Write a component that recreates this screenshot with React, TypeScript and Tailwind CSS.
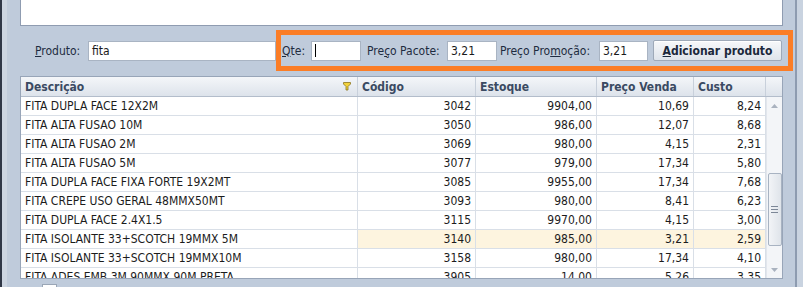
import React from 'react';

type Row = { desc: string; cod: string; est: string; venda: string; custo: string; hl?: boolean };

const rows: Row[] = [
  { desc: 'FITA DUPLA FACE 12X2M', cod: '3042', est: '9904,00', venda: '10,69', custo: '8,24' },
  { desc: 'FITA ALTA FUSAO 10M', cod: '3050', est: '986,00', venda: '12,07', custo: '8,68' },
  { desc: 'FITA ALTA FUSAO 2M', cod: '3069', est: '980,00', venda: '4,15', custo: '2,31' },
  { desc: 'FITA ALTA FUSAO 5M', cod: '3077', est: '979,00', venda: '17,34', custo: '5,80' },
  { desc: 'FITA DUPLA FACE FIXA FORTE 19X2MT', cod: '3085', est: '9955,00', venda: '17,34', custo: '7,68' },
  { desc: 'FITA CREPE USO GERAL 48MMX50MT', cod: '3093', est: '980,00', venda: '8,41', custo: '6,23' },
  { desc: 'FITA DUPLA FACE 2.4X1.5', cod: '3115', est: '9970,00', venda: '4,15', custo: '3,00' },
  { desc: 'FITA ISOLANTE 33+SCOTCH 19MMX 5M', cod: '3140', est: '985,00', venda: '3,21', custo: '2,59', hl: true },
  { desc: 'FITA ISOLANTE 33+SCOTCH 19MMX10M', cod: '3158', est: '980,00', venda: '17,34', custo: '4,10' },
  { desc: 'FITA ADES EMB 3M 90MMX 90M PRETA', cod: '3905', est: '14,00', venda: '5,26', custo: '3,35' },
];

const font = { fontFamily: 'Tahoma, "DejaVu Sans Condensed", "Liberation Sans", sans-serif' };

function Field({ value, w, caret }: { value?: string; w: string; caret?: boolean }) {
  return (
    <div className={`${w} h-[20px] shrink-0 bg-white border border-[#a9b4c3] flex items-center px-[3px] text-[12px] text-[#1a1a1a]`}>
      {caret ? <span className="w-px h-[13px] bg-black" /> : value}
    </div>
  );
}

function FilterIcon() {
  return (
    <svg width="8" height="9" viewBox="0 0 8 9">
      <path d="M0.5 0.5 H7.5 V2 L5 4.5 V8 H3 V4.5 L0.5 2 Z" fill="#f2d23c" stroke="#8a7420" strokeWidth="0.8" />
    </svg>
  );
}

export default function App() {
  return (
    <div className="w-[803px] h-[287px] overflow-hidden bg-[#bfcbdb] flex" style={font}>
      {/* left frame */}
      <div className="w-[2px] shrink-0 bg-[#2f3746]" />
      <div className="w-[5px] shrink-0 bg-[#ccd5e1]" />

      <div className="flex-1 flex flex-col pl-[13px] pr-[2px] min-w-0">
        {/* memo area */}
        <div className="h-[26px] w-[763px] shrink-0 bg-white border border-t-0 border-[#8f9cb1]" />

        {/* filter row */}
        <div className="flex items-center mt-[4px] h-[41px] shrink-0">
          <span className="ml-[15px] w-[53px] shrink-0 text-[12px] text-[#1e2b40]">
            <span className="underline">P</span>roduto:
          </span>
          <div className="w-[188px] h-[20px] shrink-0 bg-white border border-[#a9b4c3] flex items-center px-[3px] text-[12px] text-[#1a1a1a]">
            fita
          </div>
          <div className="h-[41px] w-[517px] shrink-0 border-[5px] border-[#fb7d26] flex items-center pl-[1px] text-[12px] text-[#1e2b40]">
            <span className="w-[29px] shrink-0">
              <span className="underline">Q</span>te:
            </span>
            <Field w="w-[50px]" caret />
            <span className="ml-[6px] w-[80px] shrink-0 whitespace-nowrap">
              Pre<span className="underline">ç</span>o Pacote:
            </span>
            <Field w="w-[50px]" value="3,21" />
            <span className="ml-[3px] w-[99px] shrink-0 whitespace-nowrap">
              Preço Pro<span className="underline">m</span>oção:
            </span>
            <Field w="w-[49px]" value="3,21" />
            <button className="ml-[5px] w-[129px] h-[21px] shrink-0 rounded-[2px] border border-[#9ea9b8] bg-gradient-to-b from-[#f7f8fa] to-[#dfe4eb] text-[12px] font-bold text-[#1b283b] shadow-[inset_0_1px_0_#ffffff]">
              <span className="underline">A</span>dicionar produto
            </button>
          </div>
        </div>

        {/* grid */}
        <div className="mt-[5px] w-[763px] h-[203px] shrink-0 border border-[#98a5b8] bg-white overflow-hidden flex flex-col">
          <div className="flex h-[20px] bg-gradient-to-b from-[#f4f6f9] to-[#dde3eb] border-b border-[#b3bdcb] text-[12px] font-bold text-[#3a4a62] shrink-0">
            <div className="w-[337px] border-r border-[#c8d0db] flex items-center justify-between pl-[4px] pr-[6px]">
              <span>Descrição</span>
              <FilterIcon />
            </div>
            <div className="w-[118px] border-r border-[#c8d0db] flex items-center pl-[4px]">Código</div>
            <div className="w-[121px] border-r border-[#c8d0db] flex items-center pl-[4px]">Estoque</div>
            <div className="w-[97px] border-r border-[#c8d0db] flex items-center pl-[4px]">Preço Venda</div>
            <div className="w-[72px] border-r border-[#c8d0db] flex items-center pl-[4px]">Custo</div>
            <div className="flex-1" />
          </div>
          <div className="flex flex-1 min-h-0">
            <div className="flex flex-col w-[745px] text-[12px] text-[#1c1c1c]">
              {rows.map((r) => (
                <div key={r.cod} className="flex h-[19px] shrink-0 border-b border-[#d9dfe7]">
                  <div className="w-[337px] border-r border-[#d9dfe7] flex items-center pl-[4px] whitespace-nowrap">{r.desc}</div>
                  <div className={`w-[118px] border-r border-[#d9dfe7] flex items-center justify-end pr-[4px] ${r.hl ? 'bg-[#fdf4df]' : ''}`}>{r.cod}</div>
                  <div className={`w-[121px] border-r border-[#d9dfe7] flex items-center justify-end pr-[4px] ${r.hl ? 'bg-[#fdf4df]' : ''}`}>{r.est}</div>
                  <div className={`w-[97px] border-r border-[#d9dfe7] flex items-center justify-end pr-[4px] ${r.hl ? 'bg-[#fdf4df]' : ''}`}>{r.venda}</div>
                  <div className={`w-[72px] border-r border-[#d9dfe7] flex items-center justify-end pr-[4px] ${r.hl ? 'bg-[#fdf4df]' : ''}`}>{r.custo}</div>
                </div>
              ))}
            </div>
            {/* scrollbar */}
            <div className="flex-1 bg-[#f3f5f8] border-l border-[#e2e6ec] flex flex-col items-center pt-[7px]">
              <svg width="7" height="4" viewBox="0 0 7 4"><path d="M0 4 L3.5 0 L7 4 Z" fill="#a9b2bf" /></svg>
              <div className="mt-[65px] w-[14px] h-[73px] rounded-[2px] border border-[#a8b3c2] bg-gradient-to-r from-[#f2f4f7] to-[#dfe4ea] flex flex-col items-center justify-center gap-[2px]">
                <span className="w-[7px] h-px bg-[#7c8797]" />
                <span className="w-[7px] h-px bg-[#7c8797]" />
                <span className="w-[7px] h-px bg-[#7c8797]" />
              </div>
              <svg className="mt-[22px]" width="7" height="4" viewBox="0 0 7 4"><path d="M0 0 L3.5 4 L7 0 Z" fill="#a9b2bf" /></svg>
            </div>
          </div>
        </div>

        <div className="ml-[22px] mt-[5px] w-[15px] h-[15px] shrink-0 bg-white border border-[#9aa6b6]" />
      </div>

      {/* right frame */}
      <div className="w-[2px] shrink-0 bg-[#8d9bb0]" />
      <div className="w-[6px] shrink-0 bg-[#c9d3e0]" />
    </div>
  );
}
